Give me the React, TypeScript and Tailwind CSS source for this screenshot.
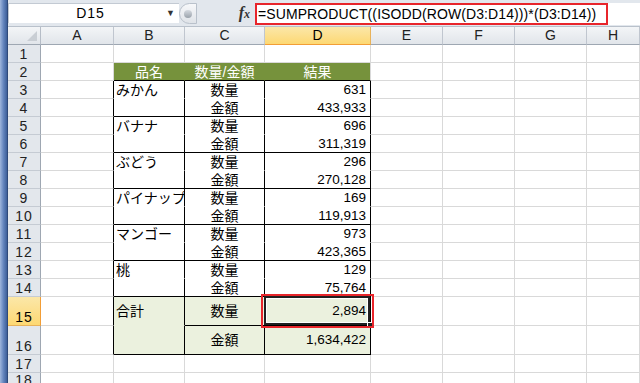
import React from 'react'

const colWidths = ['A', 'B', 'C', 'D', 'E', 'F', 'G', 'H']
const rowNums = Array.from({ length: 18 }, (_, i) => i + 1)

const data: Record<number, [string, string, string]> = {
  2: ['品名', '数量/金額', '結果'],
  3: ['みかん', '数量', '631'],
  4: ['', '金額', '433,933'],
  5: ['バナナ', '数量', '696'],
  6: ['', '金額', '311,319'],
  7: ['ぶどう', '数量', '296'],
  8: ['', '金額', '270,128'],
  9: ['パイナップル', '数量', '169'],
  10: ['', '金額', '119,913'],
  11: ['マンゴー', '数量', '973'],
  12: ['', '金額', '423,365'],
  13: ['桃', '数量', '129'],
  14: ['', '金額', '75,764'],
  15: ['合計', '数量', '2,894'],
  16: ['', '金額', '1,634,422'],
}

const inTable = (r: number) => r >= 3 && r <= 16

function rightBorder(r: number, c: number) {
  if (r === 2 && (c === 2 || c === 3)) return 'border-r-[#76923c]'
  if (inTable(r) && c >= 1 && c <= 4) return 'border-r-black'
  return 'border-r-[#d9d9d9]'
}

function bottomBorder(r: number, c: number) {
  if (c >= 2 && c <= 4) {
    if (r === 2) return 'border-b-black'
    if (inTable(r)) {
      if (r % 2 === 0) return 'border-b-black'
      if (r === 15 && c !== 2) return 'border-b-black'
      if (r === 15) return 'border-b-[#ebf1de]'
      return 'border-b-white'
    }
  }
  return 'border-b-[#d9d9d9]'
}

function cellBg(r: number, c: number) {
  if (c >= 2 && c <= 4) {
    if (r === 2) return 'bg-[#76923c] text-white'
    if (r === 15 || r === 16) return 'bg-[#ebf1de]'
  }
  return 'bg-white'
}

function Cell({ r, c }: { r: number; c: number }) {
  const row = data[r]
  const text = row && c >= 2 && c <= 4 ? row[c - 2] : ''
  const isNum = c === 4 && r !== 2
  const align =
    r === 2 || c === 3 ? 'justify-center' : isNum ? 'justify-end pr-[4px]' : 'justify-start pl-[2px]'
  const selected = r === 15 && c === 4
  return (
    <div
      className={`relative flex items-center whitespace-nowrap border-r border-b ${rightBorder(r, c)} ${bottomBorder(r, c)} ${cellBg(r, c)} ${align} ${selected ? 'overflow-visible z-10' : 'overflow-hidden'}`}
    >
      <span className={`leading-none ${isNum ? 'text-[13.5px]' : 'text-[14px]'}`}>{text}</span>
      {selected && (
        <>
          <div className="absolute -left-[1px] -top-[1px] right-0 bottom-0 border-2 border-[#202020] shadow-[inset_0_0_0_1px_#ffffff]" />
          <div className="absolute -right-[3px] -bottom-[3px] w-[6px] h-[6px] bg-[#202020] border border-white" />
          <div className="absolute -left-[4px] -top-[3px] -right-[4px] -bottom-[3px] border-2 border-[#e8252b]" />
        </>
      )}
    </div>
  )
}

export default function App() {
  return (
    <div className="w-[640px] h-[383px] overflow-hidden flex bg-white text-black font-['Liberation_Sans','Noto_Sans_CJK_JP',sans-serif]">
      {/* window frame edge */}
      <div className="w-[8px] h-full shrink-0 bg-gradient-to-r from-[#9fb6dc] via-[#6485bd] to-[#3d5f99] border-r border-[#2f4a7a]" />

      <div className="flex-1 flex flex-col min-w-0">
        {/* formula bar */}
        <div className="h-[27px] shrink-0 flex items-start pt-[3px] bg-[#e2e7ed] border-b border-[#b9c1cb]">
          <div className="w-[171px] h-[20px] bg-white border-t border-l border-[#c3cad3] flex items-center">
            <span className="flex-1 text-center text-[14px] pl-[6px] tracking-[1px]">D15</span>
            <span className="w-[12px] text-[9px] text-[#333] mr-[1px]">▼</span>
          </div>
          <div className="w-[18px] h-[21px] rounded-l-full bg-gradient-to-b from-[#f7f8fa] to-[#dfe3e8] border border-[#b9c1cb] flex items-center justify-center">
            <div className="w-[8px] h-[8px] rounded-full bg-gradient-to-b from-[#d5dae0] to-[#9aa2ab]" />
          </div>
          <div className="w-[58px] h-[20px] flex items-center justify-end pr-[5px]">
            <span className="font-['Liberation_Serif',serif] italic font-bold text-[16px] text-[#333] leading-none">
              f<span className="text-[12px]">x</span>
            </span>
          </div>
          <div className="flex-1 h-[22px] bg-white flex items-stretch">
            <div className="w-[353px] border-2 border-[#e8252b] flex items-center pl-[1px]">
              <span className="text-[14px] leading-none whitespace-nowrap tracking-[0.1px]">
                =SUMPRODUCT((ISODD(ROW(D3:D14)))*(D3:D14))
              </span>
            </div>
          </div>
        </div>

        {/* sheet */}
        <div className="flex-1 grid grid-cols-[33px_73px_71px_80px_106px_72px_72px_72px_1fr] grid-rows-[18px_repeat(14,18px)_29px_29px_18px_1fr]">
          {/* corner */}
          <div className="relative bg-gradient-to-b from-[#f3f5f7] to-[#e1e5ea] border-r border-b border-r-[#b6bdc7] border-b-[#9ea7b2]">
            <div className="absolute right-[3px] bottom-[3px] w-0 h-0 border-l-[10px] border-l-transparent border-b-[10px] border-b-[#c9ced4]" />
          </div>
          {colWidths.map((l) =>
            l === 'D' ? (
              <div
                key={l}
                className="flex items-center justify-center text-[14px] bg-gradient-to-b from-[#fbe7a8] to-[#fdd872] border-r border-b border-r-[#e8b25a] border-b-[#f29d36]"
              >
                {l}
              </div>
            ) : (
              <div
                key={l}
                className="flex items-center justify-center text-[14px] text-[#222] bg-gradient-to-b from-[#f3f5f7] to-[#e1e5ea] border-r border-b border-r-[#c0c6cf] border-b-[#9ea7b2]"
              >
                {l}
              </div>
            )
          )}

          {rowNums.map((r) => (
            <React.Fragment key={r}>
              <div
                className={`flex justify-center items-end pb-[1px] text-[14px] leading-none tracking-[1px] border-r border-b ${
                  r === 15
                    ? 'bg-gradient-to-b from-[#fbe7a8] to-[#fdd872] border-r-[#f29d36] border-b-[#e8b25a] text-black'
                    : 'bg-[#e3e7ec] border-r-[#9ea7b2] border-b-[#c5cbd3] text-[#222]'
                }`}
              >
                {r}
              </div>
              {colWidths.map((_, i) => (
                <Cell key={i} r={r} c={i + 1} />
              ))}
            </React.Fragment>
          ))}
        </div>
      </div>
    </div>
  )
}
